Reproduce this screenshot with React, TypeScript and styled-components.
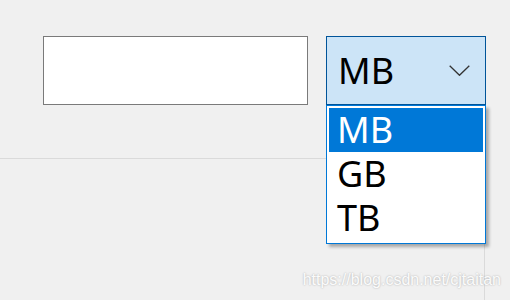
import * as React from 'react';
import styled, { createGlobalStyle } from 'styled-components';

const GlobalStyle = createGlobalStyle`
  html, body {
    margin: 0;
    padding: 0;
    background: #f0f0f0;
  }
  body {
    font-family: "Noto Sans", "Open Sans", sans-serif;
  }
`;

const Window = styled.div`
  position: relative;
  width: 510px;
  height: 300px;
  overflow: hidden;
  background: #f0f0f0;
`;

const TopRow = styled.div`
  display: flex;
  align-items: flex-start;
  gap: 18px;
  padding: 36px 0 0 43px;
`;

const TextBox = styled.div`
  box-sizing: border-box;
  width: 265px;
  height: 69px;
  background: #ffffff;
  border: 1px solid #7a7a7a;
`;

const ComboWrap = styled.div`
  position: relative;
  z-index: 2;
`;

const ComboBox = styled.div`
  box-sizing: border-box;
  width: 160px;
  height: 69px;
  display: flex;
  align-items: center;
  justify-content: space-between;
  padding: 0 15px 0 11px;
  background: #cce4f7;
  border: 1px solid #005499;
  font-size: 36px;
  line-height: 1;
  color: #000;
`;

const Chevron = styled.svg`
  display: block;
  width: 21px;
  height: 11px;
`;

const DropList = styled.div`
  position: absolute;
  top: 69px;
  left: 0;
  box-sizing: border-box;
  width: 160px;
  padding: 2px 2px 3px;
  background: #ffffff;
  border: 1px solid #0078d7;
  box-shadow: 3px 3px 3px rgba(0, 0, 0, 0.3);
`;

const Item = styled.div<{ $active?: boolean }>`
  height: 44px;
  display: flex;
  align-items: center;
  padding-left: 8px;
  font-size: 36px;
  line-height: 40px;
  background: ${p => (p.$active ? '#0078d7' : 'transparent')};
  color: ${p => (p.$active ? '#ffffff' : '#000000')};
`;

const LowerPanel = styled.div`
  position: relative;
  box-sizing: border-box;
  width: 485px;
  height: 142px;
  margin-top: 53px;
  border-top: 1px solid #dadada;
  border-right: 1px solid #dadada;
`;

const Watermark = styled.div`
  position: absolute;
  right: -17px;
  bottom: 11px;
  font-family: "Liberation Sans", Arial, sans-serif;
  font-size: 16px;
  line-height: 18px;
  color: rgba(255, 255, 255, 0.95);
  text-shadow: 0 0 2px rgba(0, 0, 0, 0.3);
  white-space: nowrap;
`;

const units = ['MB', 'GB', 'TB'];

export default function App() {
    const selected = 'MB';
    return (
        <Window>
            <GlobalStyle />
            <TopRow>
                <TextBox />
                <ComboWrap>
                    <ComboBox>
                        <span>{selected}</span>
                        <Chevron viewBox="0 0 21 11">
                            <polyline points="0.7,0.7 10.5,10.3 20.3,0.7" fill="none" stroke="#333" strokeWidth="1.3" />
                        </Chevron>
                    </ComboBox>
                    <DropList>
                        {units.map(u => (
                            <Item key={u} $active={u === selected}>{u}</Item>
                        ))}
                    </DropList>
                </ComboWrap>
            </TopRow>
            <LowerPanel>
                <Watermark>https://blog.csdn.net/cjtaitan</Watermark>
            </LowerPanel>
        </Window>
    );
}
